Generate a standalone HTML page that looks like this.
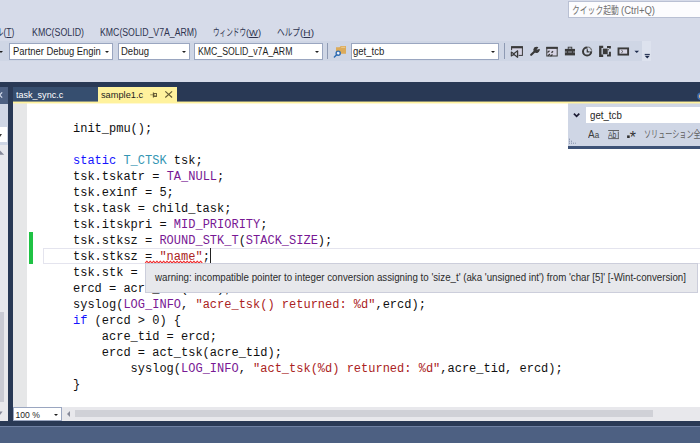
<!DOCTYPE html>
<html lang="ja">
<head>
<meta charset="utf-8">
<title>sample1.c</title>
<style>
html,body{margin:0;padding:0;}
body{width:700px;height:443px;overflow:hidden;position:relative;background:#D6DBE9;
  font-family:"Liberation Sans","Noto Sans CJK JP",sans-serif;font-size:10px;color:#1E1E1E;}
.abs{position:absolute;}
.t{position:absolute;white-space:pre;line-height:12px;height:12px;font-size:10px;transform-origin:0 0;display:block;}
u{text-decoration:underline;text-underline-offset:1px;}
.jp{font-weight:400;}
#tbband{left:0;top:41px;width:642px;height:20px;background:#CFD6E5;}
#tbgrip{left:642px;top:41px;width:9px;height:20px;background:#DDE2EE;}
.combo{position:absolute;top:43px;height:15px;background:#fff;border:1px solid #9AA6C0;overflow:hidden;}
.arr{position:absolute;width:0;height:0;border-left:2.6px solid transparent;border-right:2.6px solid transparent;border-top:2.9px solid #1E1E1E;}
.sep{position:absolute;top:43px;width:1px;height:16px;background:#8E9AB3;}
#frame{left:0;top:82px;width:700px;height:344px;background:#293955;}
#status{left:0;top:426px;width:700px;height:17px;background:#4D6082;border-top:1px solid #6F81A3;box-sizing:border-box;}
#lp{left:0;top:87px;width:8px;height:334px;background:#E8E8EC;overflow:hidden;}
#tab1{left:13px;top:87px;width:85px;height:15px;background:#364E6F;}
#tab2{left:98px;top:87px;width:79px;height:16px;background:#FFF29D;}
#tabline{left:13px;top:101px;width:687px;height:1px;background:#FFF29D;z-index:3;border-top:1px solid rgba(255,242,157,0.45);border-bottom:1px solid rgba(255,242,157,0.45);background-clip:padding-box;}
#row103{left:13px;top:103px;width:687px;height:1px;background:linear-gradient(to right,#E6E7E8 0,#E6E7E8 14px,#fff 14px,#fff 555px,#CFD6E5 555px);}
#ed{left:13px;top:104px;width:687px;height:303px;background:#fff;overflow:hidden;}
#margin{left:0;top:0;width:14px;height:303px;background:#E6E7E8;}
.code{position:absolute;left:60px;font-family:"Liberation Mono",monospace;font-size:12px;line-height:16px;height:16px;white-space:pre;color:#101010;}
.kw{color:#1414FF}.ty{color:#3496B3}.mc{color:#781894}.st{color:#AA2222}
#hs{left:13px;top:407px;width:687px;height:14px;background:#E8E8EC;}
#zoom{left:0;top:0;width:49px;height:14px;background:#fff;border:1px solid #9AA6C0;box-sizing:border-box;}
</style>
</head>
<body>
<!-- quick launch -->
<div class="abs" style="left:568px;top:1px;width:140px;height:15px;background:#FCFCFE;border:1px solid #B9C0D3;"></div>
<span class="t jp" id="qla" style="transform:scaleX(0.7800);left:572px;top:5px;color:#707070;">クイック起動</span><span class="t" id="qlb" style="transform:scaleX(0.9486);left:620.5px;top:5px;color:#707070;">(Ctrl+Q)</span>

<!-- menu -->
<span class="t" id="m0" style="transform:scaleX(0.8500);left:-5px;top:26.5px;color:#2E3450;"><span class="jp">ル</span>(<u>T</u>)</span>
<span class="t" id="m1" style="transform:scaleX(0.8828);left:31.5px;top:26.5px;color:#2E3450;">KMC(SOLID)</span>
<span class="t" id="m2" style="transform:scaleX(0.8728);left:99.5px;top:26.5px;color:#2E3450;">KMC(SOLID_V7A_ARM)</span>
<span class="t jp" id="m3a" style="transform:scaleX(0.6600);left:212.5px;top:26.5px;color:#2E3450;">ウィンドウ</span><span class="t" id="m3b" style="transform:scaleX(0.9928);left:245.5px;top:26.5px;color:#2E3450;font-size:9.4px;">(<u>W</u>)</span>
<span class="t jp" id="m4a" style="transform:scaleX(0.7667);left:276.5px;top:26.5px;color:#2E3450;">ヘルプ</span><span class="t" id="m4b" style="transform:scaleX(1.0743);left:299.5px;top:26.5px;color:#2E3450;font-size:9.4px;">(<u>H</u>)</span>

<!-- toolbar -->
<div class="abs" id="tbband"></div>
<div class="abs" id="tbgrip"></div>
<i class="arr" style="left:-1.5px;top:50.5px;"></i>
<div class="combo" style="left:9px;width:102px;"><span class="t" id="c1" style="transform:scaleX(0.9400);left:3px;top:2px;">Partner Debug Engin</span><i class="abs" style="right:0;top:0;width:11.5px;height:15px;background:#fff;"></i><i class="arr" style="right:3px;top:7px;"></i></div>
<div class="combo" style="left:117.5px;width:70px;"><span class="t" id="c2" style="transform:scaleX(0.9502);left:2px;top:2px;">Debug</span><i class="arr" style="right:3px;top:7px;"></i></div>
<div class="combo" style="left:194px;width:126.5px;"><span class="t" id="c3" style="transform:scaleX(0.8710);left:2.5px;top:2px;">KMC_SOLID_v7A_ARM</span><i class="arr" style="right:3px;top:7px;"></i></div>
<div class="sep" style="left:327px;"></div>
<svg class="abs" style="left:330px;top:42px;" width="20" height="18" viewBox="330 42 20 18">
<path d="M336 47.2 L339.5 47.2 L340.8 45.9 L346 45.9 L346 53.8 L336 53.8 Z" fill="#DCAB5A"/>
<rect x="341.2" y="46.8" width="4" height="0.9" fill="#EFD29C"/>
<circle cx="338.2" cy="53.2" r="2.1" fill="#D6DBE9" stroke="#2D6CB3" stroke-width="1.3"/>
<rect x="337.5" y="52.5" width="1.4" height="1.4" fill="#fff"/>
<path d="M336.7 54.8 L334.4 57" stroke="#2D6CB3" stroke-width="1.5" stroke-linecap="round"/>
</svg>
<div class="combo" style="left:351px;width:146px;"><span class="t" id="c4" style="transform:scaleX(0.9500);left:1.3px;top:2px;">get_tcb</span><i class="arr" style="right:3px;top:7px;"></i></div>
<div class="sep" style="left:504px;"></div>
<svg class="abs" style="left:506px;top:42px;" width="150" height="20" viewBox="506 42 150 20">
<!-- 1 window with vs logo -->
<rect x="511.6" y="46.8" width="10.8" height="8.6" fill="#D6D4E4" stroke="#3A3A3A" stroke-width="1"/>
<rect x="511.1" y="46.3" width="11.8" height="2" fill="#3A3A3A"/>
<rect x="510.6" y="50.2" width="8" height="7.6" fill="#CFD6E5"/>
<path d="M511.3 52 L514.2 54 L511.3 56 Z M517.6 50.8 L517.6 57.3 L513.4 54 Z" fill="none" stroke="#3A3A3A" stroke-width="1.1" stroke-linejoin="round"/>
<rect x="516.9" y="50.8" width="1.2" height="6.6" fill="#3A3A3A"/>
<!-- 2 wrench -->
<path d="M531.2 54.8 L535.4 50.8" stroke="#3A3A3A" stroke-width="2.2" stroke-linecap="round"/>
<path d="M538.9 48.2 A3 3 0 1 1 536.3 46.9 L536.3 49.3 L537.5 50 L538.9 48.2 Z" fill="#3A3A3A"/>
<circle cx="536.7" cy="49.6" r="2.9" fill="#3A3A3A"/>
<path d="M536.6 49.8 L539.4 45.8 L541 48.4 Z" fill="#CFD6E5"/>
<!-- 3 window -->
<rect x="546.8" y="47.4" width="10.4" height="8.6" fill="#D6D4E4" stroke="#3A3A3A" stroke-width="1"/>
<rect x="546.3" y="46.9" width="11.4" height="2" fill="#3A3A3A"/>
<path d="M547.5 52.5 L549.5 50.8 M548 55.8 L550 54 M551.5 52.8 L553 51.2 M550.5 56.3 L552.5 54.6" stroke="#3A3A3A" stroke-width="1.3"/>
<!-- 4 toolbox -->
<rect x="564.9" y="48.9" width="10.1" height="6.5" fill="#3A3A3A"/>
<rect x="568.2" y="47.2" width="3.6" height="2" fill="none" stroke="#3A3A3A" stroke-width="0.9"/>
<rect x="564.9" y="51.6" width="10.1" height="0.8" fill="#B9BECB"/>
<rect x="566.9" y="50.9" width="1.2" height="2.2" fill="#3A3A3A"/><rect x="571.9" y="50.9" width="1.2" height="2.2" fill="#3A3A3A"/>
<!-- 5 circle -->
<circle cx="587.1" cy="51.5" r="4.1" fill="none" stroke="#3A3A3A" stroke-width="2"/>
<path d="M587.6 51.2 L587.6 46 A5.4 5.4 0 0 1 592.6 51.2 Z" fill="#CFD6E5"/>
<path d="M587.3 49.2 L587.3 51.9 L589.6 51.9" fill="none" stroke="#3A3A3A" stroke-width="1.3"/>
<path d="M588.2 47 A4.6 4.6 0 0 1 591.7 50.6" fill="none" stroke="#707070" stroke-width="1.1"/>
<!-- 6 brackets -->
<path d="M603.2 46.9 L600.3 46.9 L600.3 55.7 L603.2 55.7" fill="none" stroke="#3A3A3A" stroke-width="2.4"/>
<path d="M607 46.9 L609.9 46.9 L609.9 48.6 M609.9 51.8 L609.9 55.6 L607 55.6" fill="none" stroke="#3A3A3A" stroke-width="2"/>
<rect x="602.8" y="48.6" width="4.9" height="5.6" fill="#3A3A3A"/>
<rect x="607.6" y="49" width="1.4" height="1.4" fill="#6A6A6A"/>
<!-- 7 rect with play -->
<rect x="618.5" y="48.4" width="9.6" height="6.2" fill="#D9D7E6" stroke="#3A3A3A" stroke-width="1.9"/>
<path d="M621.3 50.2 L623 51.5 L621.3 52.8" fill="none" stroke="#5A5A5A" stroke-width="0.9"/>
<!-- dropdown -->
<path d="M634.4 50.7 L639.1 50.7 L636.75 53.1 Z" fill="#1B2A4B"/>
<!-- overflow -->
<rect x="644.7" y="53.9" width="5.1" height="1" fill="#1B2A4B"/>
<path d="M644.7 55.8 L649.8 55.8 L647.25 58.4 Z" fill="#1B2A4B"/>
</svg>

<!-- frame -->
<div class="abs" id="frame"></div>
<div class="abs" id="status"></div>

<!-- left panel -->
<div class="abs" id="lp">
  <div class="abs" style="left:0;top:0;width:8px;height:17px;background:#4D6082;"></div>
  <div class="abs" style="left:0;top:17px;width:8px;height:41px;background:#CFD6E5;"></div>
  <div class="abs" style="left:0;top:40px;width:6.5px;height:15px;background:#fff;"></div>
  <i class="arr" style="left:-1.6px;top:46.5px;border-top-color:#3A3A3A;border-top-width:3px;"></i>
  <div class="abs" style="left:0;top:225px;width:4px;height:90px;background:#C9CAD3;"></div>
  <svg class="abs" style="left:0;top:0;" width="8" height="334" viewBox="0 87 8 334">
<path d="M-3 92.4 L2.2 97.6 M-3 97.6 L2.2 92.4" stroke="#D5DCEC" stroke-width="1.2"/>
<path d="M-2 154.8 L4.2 154.8 L0 150.6 Z" fill="#868999"/>
<path d="M-3 411.6 L2.6 411.6 L0 415 Z" fill="#868999"/>
</svg>
</div>

<!-- tabs -->
<div class="abs" id="tab1"><span class="t" id="t1" style="transform:scaleX(0.9636);left:3px;top:1.6px;color:#fff;font-size:9.4px;">task_sync.c</span></div>
<div class="abs" id="tab2"><span class="t" id="t2" style="transform:scaleX(0.9852);left:2.5px;top:1.6px;color:#1E1E1E;font-size:9.4px;">sample1.c</span><svg class="abs" style="left:50px;top:2px;" width="28" height="12" viewBox="148 89 28 12">
<path d="M150.2 94.8 L153 94.8" stroke="#9A9058" stroke-width="1"/>
<path d="M153.4 92.4 L153.4 97.6" stroke="#5E5530" stroke-width="1.1"/>
<rect x="153.9" y="93.5" width="2.6" height="2.7" fill="none" stroke="#5E5530" stroke-width="0.9"/>
<path d="M153.4 96.3 L156.9 96.3" stroke="#5E5530" stroke-width="1.1"/>
<path d="M165.3 91.3 L172.1 97.5 M172.1 91.3 L165.3 97.5" stroke="#665C34" stroke-width="1.15"/>
</svg></div>
<div class="abs" id="row103"></div>
<div class="abs" id="tabline"></div>
<svg class="abs" style="left:690px;top:90px;" width="10" height="12" viewBox="690 90 10 12">
<circle cx="701" cy="96.3" r="3" fill="#D9B38A" stroke="#3B6DB0" stroke-width="1.6"/>
</svg>

<!-- editor -->
<div class="abs" id="ed">
  <div class="abs" id="margin"></div>
  <div class="abs" style="left:16px;top:127.5px;width:4.3px;height:32px;background:#1FC244;"></div>
  <div class="abs" style="left:30px;top:144px;width:670px;height:14px;border:1px solid #E4E4EE;"></div>
  <div class="abs" id="codewrap" style="left:0;top:0;width:687px;height:303px;transform:translateY(0.6px);">
  <div class="code" style="top:16px;">init_pmu();</div>
  <div class="code" style="top:48px;"><span class="kw">static</span> <span class="ty">T_CTSK</span> tsk;</div>
  <div class="code" style="top:64px;">tsk.tskatr = <span class="mc">TA_NULL</span>;</div>
  <div class="code" style="top:80px;">tsk.exinf = 5;</div>
  <div class="code" style="top:96px;">tsk.task = child_task;</div>
  <div class="code" style="top:112px;">tsk.itskpri = <span class="mc">MID_PRIORITY</span>;</div>
  <div class="code" style="top:128px;">tsk.stksz = <span class="mc">ROUND_STK_T</span>(<span class="mc">STACK_SIZE</span>);</div>
  <div class="code" style="top:144px;">tsk.stksz = <span class="st">"name"</span>;</div>
  <div class="code" style="top:160px;">tsk.stk = </div>
  <div class="code" style="top:176px;">ercd = acre_tsk(&amp;tsk);</div>
  <div class="code" style="top:192px;">syslog(<span class="mc">LOG_INFO</span>, <span class="st">"acre_tsk() returned: %d"</span>,ercd);</div>
  <div class="code" style="top:208px;"><span class="kw">if</span> (ercd &gt; 0) {</div>
  <div class="code" style="top:224px;">    acre_tid = ercd;</div>
  <div class="code" style="top:240px;">    ercd = act_tsk(acre_tid);</div>
  <div class="code" style="top:256px;">        syslog(<span class="mc">LOG_INFO</span>, <span class="st">"act_tsk(%d) returned: %d"</span>,acre_tid, ercd);</div>
  <div class="code" style="top:272px;">}</div>
  </div>
  <svg class="abs" style="left:0;top:0;" width="687" height="303"><path d="M132.20 159.10 L133.88 157.10 L135.56 159.10 L137.24 157.10 L138.92 159.10 L140.60 157.10 L142.28 159.10 L143.96 157.10 L145.64 159.10 L147.32 157.10 L149.00 159.10 L150.68 157.10 L152.36 159.10 L154.04 157.10 L155.72 159.10 L157.40 157.10 L159.08 159.10 L160.76 157.10 L162.44 159.10 L164.12 157.10 L165.80 159.10 L167.48 157.10 L169.16 159.10 L170.84 157.10 L172.52 159.10 L174.20 157.10 L175.88 159.10 L177.56 157.10 L179.24 159.10 L180.92 157.10 L182.60 159.10 L184.28 157.10 L185.96 159.10 L187.64 157.10 L189.32 159.10" fill="none" stroke="#EE2F2F" stroke-width="1.05" stroke-linejoin="round"/></svg>
  <div class="abs" style="left:197px;top:144px;width:1px;height:15px;background:#222;"></div>
  <!-- tooltip -->
  <div class="abs" style="left:132px;top:159px;width:551px;height:28px;background:#E7E8EC;border:1px solid #CCCEDB;">
    <span class="t" id="tip" style="transform:scaleX(0.9712);left:9px;top:8px;color:#2B2B2B;">warning: incompatible pointer to integer conversion assigning to 'size_t' (aka 'unsigned int') from 'char [5]' [-Wint-conversion]</span>
  </div>
  <!-- find widget -->
  <div class="abs" style="left:555px;top:-1px;width:140px;height:42.5px;background:#CFD6E5;border-bottom:3.5px solid #3D5277;">
    <div class="abs" style="left:17.5px;top:4px;width:130px;height:16px;background:#fff;"></div>
    <span class="t" id="f1" style="transform:scaleX(0.9691);left:22px;top:6.5px;">get_tcb</span>
    <span class="t" id="f2" style="transform:scaleX(0.9800);left:19.5px;top:26px;color:#3E3E3E;font-size:10.2px;">A<span style="font-size:8.2px;">a</span></span>
    <span class="t" id="f3" style="transform:scaleX(0.8000);left:40.3px;top:26px;color:#3E3E3E;font-size:8.6px;">Ab</span>
    <span class="t" id="f4" style="left:61.8px;top:29.2px;color:#333;font-size:16px;">*</span>
    <span class="t" id="f5" style="transform:scaleX(0.7100);left:76px;top:26px;color:#606060;"><span class="jp">ソリューション全</span></span>
    <svg class="abs" style="left:0;top:0;" width="140" height="46" viewBox="568 103 140 46">
<path d="M573.9 113.6 L576.6 116.3 L579.3 113.6" fill="none" stroke="#1B1B33" stroke-width="1.7"/>
<path d="M608.2 130.5 L619 130.5 M608.2 138.6 L619 138.6" stroke="#555" stroke-width="0.9"/>
<path d="M618.3 131.6 L618.3 138" stroke="#555" stroke-width="0.9"/>
<rect x="627.1" y="135.4" width="2.6" height="2.6" fill="#333"/>
<path d="M569 139.2h1M569 141.2h1M569 143.2h1M571 141.2h1M571 143.2h1M573 143.2h1M575 143.2h0.8" stroke="#7F8AA5" stroke-width="1"/>
</svg>
  </div>
</div>

<!-- bottom bar -->
<div class="abs" id="hs">
  <div class="abs" id="zoom"><span class="t" id="z1" style="transform:scaleX(1.0000);left:1.5px;top:0.5px;font-size:8.6px;">100 %</span><i class="arr" style="right:3px;top:5.5px;"></i></div>
  <i class="abs" style="left:54px;top:3.5px;width:0;height:0;border-top:3px solid transparent;border-bottom:3px solid transparent;border-right:3.5px solid #868999;"></i>
  <div class="abs" style="left:62px;top:3px;width:578px;height:7px;background:#D0D1D7;"></div>
</div>
</body>
</html>
